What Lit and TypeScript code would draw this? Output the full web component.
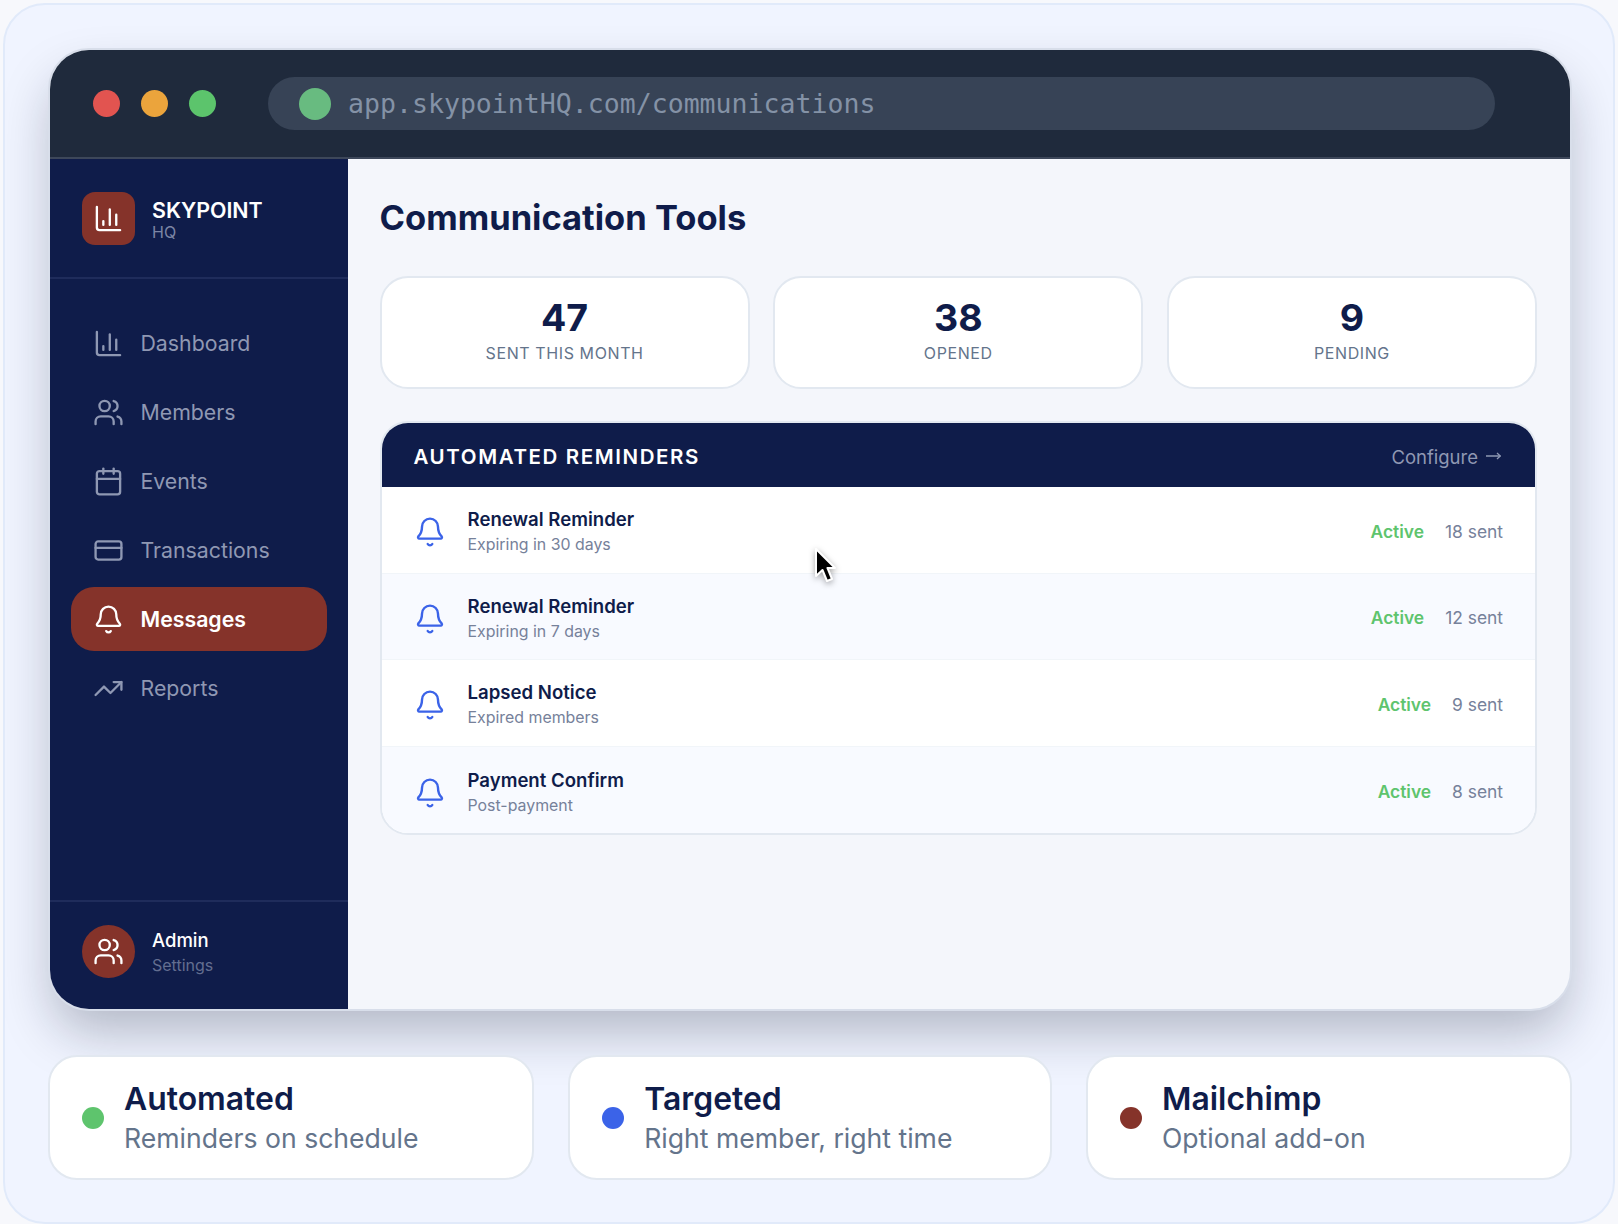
import { LitElement, html, css, svg } from 'lit';
import { customElement } from 'lit/decorators.js';

const icons = {
  chart: svg`<path d="M3 3v16a2 2 0 0 0 2 2h16"/><path d="M18 17V9"/><path d="M13 17V5"/><path d="M8 17v-3"/>`,
  users: svg`<path d="M16 21v-2a4 4 0 0 0-4-4H6a4 4 0 0 0-4 4v2"/><circle cx="9" cy="7" r="4"/><path d="M22 21v-2a4 4 0 0 0-3-3.870"/><path d="M16 3.130a4 4 0 0 1 0 7.750"/>`,
  calendar: svg`<path d="M8 2v4"/><path d="M16 2v4"/><rect x="3" y="4" width="18" height="18" rx="2"/><path d="M3 10h18"/>`,
  card: svg`<rect x="2" y="5" width="20" height="14" rx="2"/><path d="M2 10h20"/>`,
  bell: svg`<path d="M10.268 21a2 2 0 0 0 3.464 0"/><path d="M3.262 15.326A1 1 0 0 0 4 17h16a1 1 0 0 0 .74-1.673C19.41 13.956 18 12.499 18 8A6 6 0 0 0 6 8c0 4.499-1.411 5.956-2.738 7.326"/>`,
  trend: svg`<path d="M22 7 13.5 15.5 8.5 10.5 2 17"/><path d="M16 7h6v6"/>`,
};

type IconName = keyof typeof icons;

const icon = (name: IconName) => html`<svg class="icon" viewBox="0 0 24 24" fill="none" stroke="currentColor" stroke-width="1.8" stroke-linecap="round" stroke-linejoin="round">${icons[name]}</svg>`;

const nav: { label: string; icon: IconName; active?: boolean }[] = [
  { label: 'Dashboard', icon: 'chart' },
  { label: 'Members', icon: 'users' },
  { label: 'Events', icon: 'calendar' },
  { label: 'Transactions', icon: 'card' },
  { label: 'Messages', icon: 'bell', active: true },
  { label: 'Reports', icon: 'trend' },
];

const stats = [
  { value: '47', label: 'SENT THIS MONTH' },
  { value: '38', label: 'OPENED' },
  { value: '9', label: 'PENDING' },
];

const reminders = [
  { title: 'Renewal Reminder', sub: 'Expiring in 30 days', count: '18 sent' },
  { title: 'Renewal Reminder', sub: 'Expiring in 7 days', count: '12 sent' },
  { title: 'Lapsed Notice', sub: 'Expired members', count: '9 sent' },
  { title: 'Payment Confirm', sub: 'Post-payment', count: '8 sent' },
];

const features = [
  { title: 'Automated', sub: 'Reminders on schedule', dot: 'green' },
  { title: 'Targeted', sub: 'Right member, right time', dot: 'blue' },
  { title: 'Mailchimp', sub: 'Optional add-on', dot: 'red' },
];

@customElement('app-root')
export class AppRoot extends LitElement {
  static styles = css`
    :host {
      display: block;
      width: 1618px;
      height: 1224px;
      padding: 3px 3px 0;
      box-sizing: border-box;
      background: #f7f8fc;
      font-family: Inter, 'Liberation Sans', sans-serif;
      color: #0f1c4a;
    }
    * { box-sizing: border-box; }
    .frame {
      position: relative;
      height: 1221px;
      border: 2px solid #e1eafa;
      border-radius: 42px;
      background: #f0f4ff;
      padding: 43px 41px 0 43px;
      display: flex;
      flex-direction: column;
      gap: 44px;
      overflow: hidden;
    }
    .window {
      height: 963px;
      flex: none;
      display: flex;
      flex-direction: column;
      border: 2px solid #d8deea;
      border-radius: 41px;
      overflow: hidden;
      background: #f4f6fb;
      box-shadow: 0 26px 52px -6px rgba(15, 23, 42, 0.28);
    }
    .titlebar {
      height: 109px;
      flex: none;
      background: #1f2a3c;
      border-bottom: 2px solid #3d475a;
      display: flex;
      align-items: center;
      padding: 0 75px 0 42.5px;
    }
    .light { width: 27px; height: 27px; border-radius: 50%; margin-right: 21px; }
    .light.r { background: #e25450; }
    .light.y { background: #eba43c; }
    .light.g { background: #5cc46c; margin-right: 52.5px; }
    .url {
      flex: 1;
      height: 53px;
      border-radius: 27px;
      background: #374356;
      display: flex;
      align-items: center;
      gap: 17px;
      padding-left: 31px;
      font-family: 'DejaVu Sans Mono', monospace;
      font-size: 26.55px;
      color: #8492a6;
    }
    .url i { width: 32px; height: 32px; border-radius: 50%; background: #68bb80; }
    .body { flex: 1; display: flex; min-height: 0; }
    .sidebar {
      width: 297.5px;
      flex: none;
      background: #0f1c4a;
      display: flex;
      flex-direction: column;
    }
    .brand {
      height: 120px;
      flex: none;
      border-bottom: 2.5px solid #1f2c5b;
      display: flex;
      align-items: center;
      gap: 17px;
      padding: 0 32px;
    }
    .logo {
      width: 53px;
      height: 53px;
      border-radius: 13px;
      background: #85332a;
      color: #fff;
      display: flex;
      align-items: center;
      justify-content: center;
    }
    .brand-text { padding-top: 3px; }
    .brand b { display: block; font-size: 21.4px; font-weight: 600; line-height: 24px; color: #fff; }
    .brand span { display: block; font-size: 16px; line-height: 20px; color: #7c86a5; }
    .nav { flex: 1; padding: 32px 21px 0; display: flex; flex-direction: column; gap: 5px; }
    .item {
      height: 64px;
      flex: none;
      display: flex;
      align-items: center;
      gap: 16.5px;
      padding-left: 22px;
      border-radius: 23px;
      font-size: 21.3px;
      color: #8f98b3;
    }
    .item.active { background: #85332a; color: #fff; font-weight: 600; }
    .icon { width: 31px; height: 31px; flex: none; }
    .foot {
      height: 109px;
      flex: none;
      border-top: 2.5px solid #1f2c5b;
      display: flex;
      align-items: center;
      gap: 17px;
      padding: 0 32px 8px;
    }
    .avatar {
      width: 53px;
      height: 53px;
      border-radius: 50%;
      background: #85332a;
      color: #fff;
      display: flex;
      align-items: center;
      justify-content: center;
    }
    .foot b { display: block; font-size: 18.5px; font-weight: 500; line-height: 26px; color: #fff; }
    .foot span { display: block; font-size: 16px; line-height: 24px; color: #636e90; }
    .main { flex: 1; padding: 33px 33px 0 32px; min-width: 0; }
    h1 { margin: 0 0 32px; font-size: 34.5px; line-height: 52px; font-weight: 700; }
    .stats { display: grid; grid-template-columns: repeat(3, 1fr); gap: 23.5px; margin-bottom: 32px; }
    .stat {
      height: 113px;
      border: 2.5px solid #e2e8f0;
      border-radius: 28px;
      background: #fff;
      text-align: center;
      padding-top: 18px;
    }
    .stat b { display: block; font-size: 37.5px; line-height: 44px; font-weight: 700; }
    .stat span { display: block; margin-top: 2px; font-size: 16px; line-height: 22px; letter-spacing: 0.6px; color: #64748b; }
    .panel {
      border: 2.5px solid #e2e8f0;
      border-radius: 28px;
      overflow: hidden;
      background: #fff;
    }
    .panel header {
      height: 64px;
      background: #0f1c4a;
      display: flex;
      align-items: center;
      justify-content: space-between;
      padding: 2px 34px 0 32px;
      color: #fff;
      font-size: 20.5px;
      font-weight: 600;
      letter-spacing: 1.6px;
    }
    .panel header a {
      display: flex;
      align-items: center;
      gap: 8px;
      padding-top: 1px;
      font-size: 18.5px;
      font-weight: 400;
      letter-spacing: 0;
      color: #8f98b3;
    }
    .panel header a svg { width: 15px; height: 10px; margin-top: -1px; }
    .row {
      height: 86.6px;
      display: flex;
      align-items: center;
      gap: 22px;
      padding: 5px 32px 0;
      border-bottom: 1.5px solid #f1f5f9;
    }
    .row:nth-child(odd) { background: #f8faff; }
    .row:last-child { border-bottom: none; }
    .row .icon { width: 32px; height: 32px; color: #3b63e8; }
    .row .text { flex: 1; }
    .row b { display: block; font-size: 18.6px; line-height: 25px; font-weight: 600; }
    .row .text span { display: block; margin-top: 1px; font-size: 15.9px; line-height: 24px; color: #76819a; }
    .row em { font-style: normal; margin: 0 -2px 2px 0; font-size: 17.4px; font-weight: 600; color: #5ec46d; }
    .row .count { font-size: 17.4px; margin: 0 0 2px 1px; color: #76819a; }
    .features { display: grid; grid-template-columns: 486px 483.5px 486px; gap: 34.25px; }
    .feature {
      height: 125px;
      border: 2.5px solid #e2e8f0;
      border-radius: 29px;
      background: #fff;
      display: flex;
      align-items: center;
      gap: 20px;
      padding-left: 32px;
    }
    .feature i { width: 22px; height: 22px; border-radius: 50%; flex: none; }
    .feature i.green { background: #5ec46d; }
    .feature i.blue { background: #3b63e8; }
    .feature i.red { background: #85332a; }
    .feature b { display: block; font-size: 31.9px; line-height: 42px; font-weight: 600; }
    .feature span { display: block; font-size: 26.6px; line-height: 37px; color: #64748b; }
    .cursor { position: absolute; left: 808px; top: 542px; width: 24px; height: 38px; filter: drop-shadow(0 2px 3px rgba(0, 0, 0, 0.35)); }
  `;

  render() {
    return html`
      <div class="frame">
        <div class="window">
          <div class="titlebar">
            <div class="light r"></div>
            <div class="light y"></div>
            <div class="light g"></div>
            <div class="url"><i></i>app.skypointHQ.com/communications</div>
          </div>
          <div class="body">
            <aside class="sidebar">
              <div class="brand">
                <div class="logo">${icon('chart')}</div>
                <div class="brand-text"><b>SKYPOINT</b><span>HQ</span></div>
              </div>
              <nav class="nav">
                ${nav.map(n => html`<div class="item ${n.active ? 'active' : ''}">${icon(n.icon)}${n.label}</div>`)}
              </nav>
              <div class="foot">
                <div class="avatar">${icon('users')}</div>
                <div><b>Admin</b><span>Settings</span></div>
              </div>
            </aside>
            <main class="main">
              <h1>Communication Tools</h1>
              <div class="stats">
                ${stats.map(s => html`<div class="stat"><b>${s.value}</b><span>${s.label}</span></div>`)}
              </div>
              <section class="panel">
                <header>AUTOMATED REMINDERS<a>Configure<svg viewBox="0 0 15 10" fill="none" stroke="currentColor" stroke-width="1.3"><path d="M0 5h14.300"/><path d="M11 2l3.300 3-3.300 3"/></svg></a></header>
                ${reminders.map(r => html`
                  <div class="row">
                    ${icon('bell')}
                    <div class="text"><b>${r.title}</b><span>${r.sub}</span></div>
                    <em>Active</em>
                    <span class="count">${r.count}</span>
                  </div>`)}
              </section>
            </main>
          </div>
        </div>
        <div class="features">
          ${features.map(f => html`
            <div class="feature">
              <i class="${f.dot}"></i>
              <div><b>${f.title}</b><span>${f.sub}</span></div>
            </div>`)}
        </div>
        <svg class="cursor" viewBox="0 0 24 38">
          <path d="M3 2v27l6.500-6 4.500 11 5-2-4.500-11H22z" fill="#000" stroke="#fff" stroke-width="2" stroke-linejoin="round"/>
        </svg>
      </div>
    `;
  }
}
